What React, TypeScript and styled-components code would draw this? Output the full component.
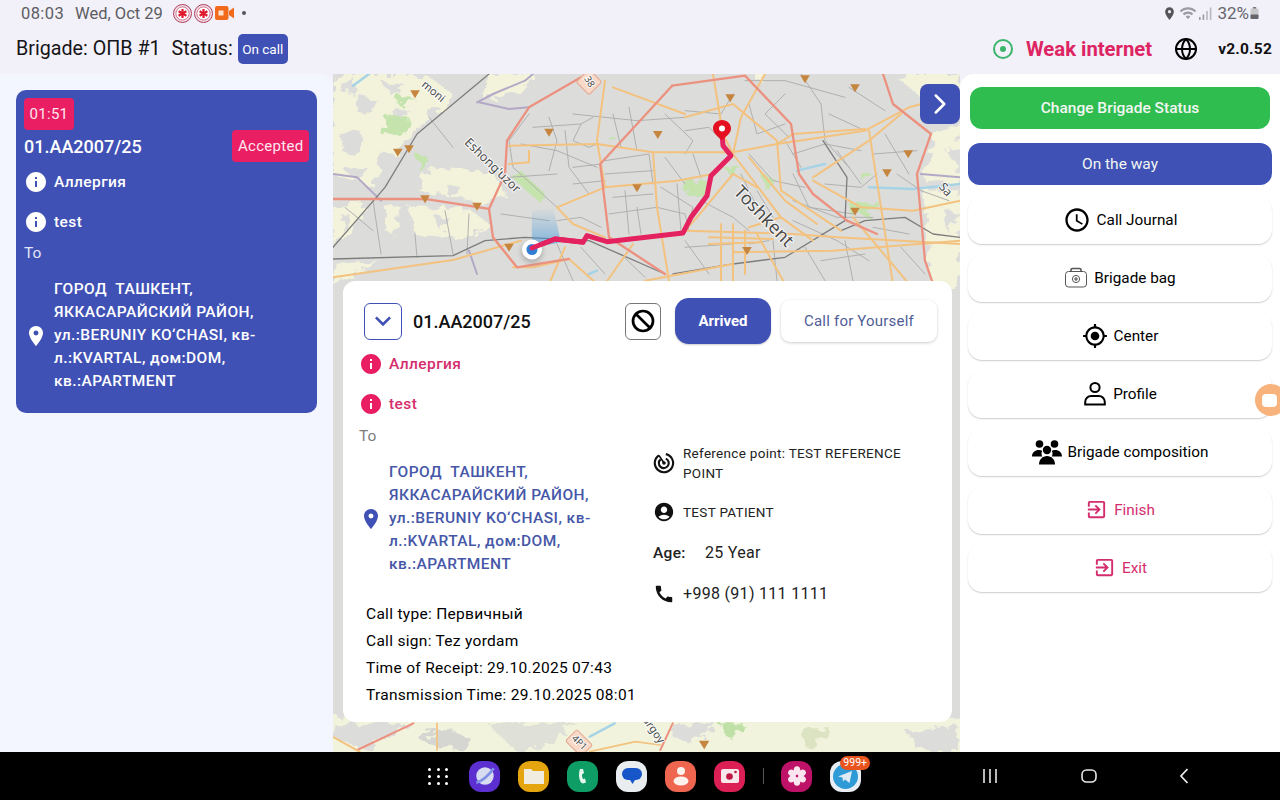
import styled, { createGlobalStyle } from 'styled-components';
import {
	MdAccountCircle,
	MdCall,
	MdExitToApp,
	MdInfo,
	MdKeyboardArrowDown,
	MdLocationOn,
	MdMyLocation,
	MdOutlineAccessTime,
	MdWifi,
} from 'react-icons/md';
import { Ban, ChevronRight, Globe } from 'lucide-react';

const blue = '#3f51b5';
const pink = '#e91e63';
const rose = '#d42d6d';

const GlobalStyle = createGlobalStyle`
	html, body {
		margin: 0;
		padding: 0;
		background: #f2f0f9;
		font-family: Roboto, "Noto Sans", sans-serif;
		overflow: hidden;
	}
	* { box-sizing: border-box; }
`;

const Page = styled.div`
	width: 1280px;
	height: 800px;
	display: flex;
	flex-direction: column;
	overflow: hidden;
	background: #f2f0f9;
	position: relative;
`;

/* ---------- android status bar ---------- */
const StatusBar = styled.div`
	height: 26px;
	padding: 0 21px;
	display: flex;
	align-items: center;
	color: #5d5d62;
	font-size: 16.5px;
`;

const StatusTime = styled.span`
	width: 54px;
	letter-spacing: 0.4px;
`;

const StatusDate = styled.span`
	width: 98px;
`;

const StatusIcons = styled.div`
	display: flex;
	align-items: center;
	gap: 2px;
`;

const StatusDot = styled.span`
	width: 4px;
	height: 4px;
	margin-left: 8px;
	border-radius: 50%;
	background: #55555c;
`;

const StatusRight = styled.div`
	margin-left: auto;
	display: flex;
	align-items: center;
	color: #66666c;
	font-size: 17px;
`;

const BatteryText = styled.span`
	margin: 0 1px 0 5px;
`;

/* ---------- app top bar ---------- */
const TopBar = styled.header`
	height: 48px;
	padding: 0 8px 3px 16px;
	display: flex;
	align-items: center;
	font-size: 19.7px;
	color: #151518;
`;

const StatusLabel = styled.span`
	margin-left: 11px;
	margin-right: 5px;
`;

const CallBadge = styled.span`
	height: 30px;
	width: 50px;
	display: flex;
	align-items: center;
	justify-content: center;
	border-radius: 5px;
	background: ${blue};
	color: #fff;
	font-size: 13.5px;
`;

const TopRight = styled.div`
	margin-left: auto;
	display: flex;
	align-items: center;
`;

const NetworkText = styled.span`
	margin-left: 13px;
	color: #dd2563;
	font-size: 20.3px;
	font-weight: 700;
`;

const GlobeWrap = styled.span`
	display: flex;
	margin: 0 20px 0 22px;
	color: #000;
`;

const Version = styled.span`
	font-size: 15.5px;
	font-weight: 700;
	letter-spacing: 0.2px;
	color: #111;
`;

/* ---------- main area ---------- */
const Main = styled.main`
	height: 678px;
	display: flex;
`;

const Sidebar = styled.aside`
	width: 333px;
	padding: 16px 16px 0;
	background: #f3f6fe;
	border-top-right-radius: 12px;
`;

const BrigadeCard = styled.section`
	width: 301px;
	height: 323px;
	padding: 8px;
	border-radius: 10px;
	background: ${blue};
	color: #fff;
`;

const Chip = styled.span`
	height: 32px;
	padding: 0 5.5px;
	display: inline-flex;
	align-items: center;
	border-radius: 4px;
	background: ${pink};
	color: #fde7ef;
	font-size: 15px;
	letter-spacing: 0.3px;
`;

const CardHead = styled.div`
	height: 32px;
	display: flex;
	align-items: center;
	justify-content: space-between;
`;

const CallNumber = styled.span`
	font-size: 18px;
	font-weight: 500;
`;

const AlertRow = styled.div<{ $tone: string }>`
	height: 20px;
	margin-top: 10px;
	padding-left: 2px;
	display: flex;
	align-items: center;
	gap: 8px;
	color: ${(p) => p.$tone};
	font-size: 15.5px;
	font-weight: 500;
	letter-spacing: 0.4px;
	& + & {
		margin-top: 20px;
	}
`;

const ToLabel = styled.div<{ $tone: string }>`
	height: 20px;
	margin-top: 11px;
	line-height: 20px;
	color: ${(p) => p.$tone};
	font-size: 15.5px;
`;

const AddressRow = styled.div<{ $tone: string }>`
	margin-top: 15px;
	padding-left: 2px;
	display: flex;
	align-items: center;
	gap: 8px;
	color: ${(p) => p.$tone};
	font-size: 15.5px;
	font-weight: 500;
	line-height: 23px;
	letter-spacing: 0.45px;
`;

const AddressText = styled.div`
	width: 212px;
`;

/* ---------- map ---------- */
const MapPane = styled.section`
	width: 627px;
	position: relative;
	overflow: hidden;
	background: #dcdcda;
`;

const MapSvg = styled.svg`
	display: block;
	width: 627px;
	height: 678px;
	& polyline {
		fill: none;
		vector-effect: non-scaling-stroke;
		stroke-linejoin: round;
		stroke-linecap: round;
	}
	& text {
		font-family: "Noto Sans", sans-serif;
		paint-order: stroke;
		stroke: rgba(255, 255, 255, 0.85);
		stroke-width: 2px;
		fill: #4b4b4b;
	}
`;

const CollapseButton = styled.button`
	position: absolute;
	top: 10px;
	right: 0;
	width: 40px;
	height: 40px;
	padding: 0;
	display: flex;
	align-items: center;
	justify-content: center;
	border: 0;
	border-radius: 8px;
	background: ${blue};
	color: #fff;
`;

const DetailCard = styled.section`
	position: absolute;
	left: 10px;
	top: 207px;
	width: 609px;
	height: 441px;
	padding: 17px 15px 0 16px;
	border-radius: 12px;
	background: #fff;
`;

const DetailHead = styled.div`
	height: 46px;
	margin-bottom: 3px;
	padding-left: 5px;
	display: flex;
	align-items: center;
`;

const SquareButton = styled.button<{ $w: number; $line: string }>`
	width: ${(p) => p.$w}px;
	height: 37px;
	padding: 0;
	display: flex;
	align-items: center;
	justify-content: center;
	border: 1px solid ${(p) => p.$line};
	border-radius: 6px;
	background: #fff;
	color: #000;
`;

const DetailNumber = styled.span`
	margin-left: 11px;
	color: #111;
	font-size: 18px;
	font-weight: 500;
`;

const ArrivedButton = styled.button`
	width: 96px;
	height: 46px;
	margin-left: 14px;
	border: 0;
	border-radius: 14px;
	background: ${blue};
	color: #fff;
	font: 700 15px Roboto, sans-serif;
	box-shadow: 0 1px 2px rgba(0, 0, 0, 0.2);
`;

const SelfButton = styled.button`
	width: 156px;
	height: 42px;
	margin-left: 10px;
	border: 0;
	border-radius: 9px;
	background: #fff;
	color: #4f5d97;
	font: 400 15px Roboto, sans-serif;
	letter-spacing: 0.2px;
	box-shadow: 0 1px 3px rgba(0, 0, 0, 0.2);
`;

const Spacer = styled.span`
	flex: 1;
`;

const DetailColumns = styled.div`
	margin-top: 1px;
	display: grid;
	grid-template-columns: 294px 1fr;
`;

const InfoList = styled.div`
	margin-top: 25px;
	padding-left: 7px;
	color: #000;
	font-size: 15.5px;
	line-height: 27px;
	letter-spacing: 0.3px;
`;

const FactColumn = styled.div`
	padding-top: 28px;
	display: flex;
	flex-direction: column;
	gap: 17px;
`;

const FactRow = styled.div<{ $size: number }>`
	min-height: 24px;
	display: flex;
	align-items: center;
	gap: 8px;
	color: #222;
	font-size: ${(p) => p.$size}px;
	line-height: 20px;
	letter-spacing: 0.3px;
`;

const AgeKey = styled.span`
	width: 52px;
	font-size: 15.5px;
	font-weight: 500;
`;

const AgeRow = styled(FactRow)`
	gap: 0;
`;

/* ---------- right panel ---------- */
const ActionPanel = styled.aside`
	position: relative;
	width: 320px;
	padding: 13px 8px 0;
	display: flex;
	flex-direction: column;
	border-top-left-radius: 14px;
	background: #fff;
`;

const SolidButton = styled.button<{ $bg: string; $inset: number; $after: number; $weight: number }>`
	height: 42px;
	margin: 0 ${(p) => p.$inset}px ${(p) => p.$after}px;
	border: 0;
	border-radius: 12px;
	background: ${(p) => p.$bg};
	color: #f2f6f2;
	font: ${(p) => p.$weight} 15.5px Roboto, sans-serif;
`;

const MenuButton = styled.button<{ $danger?: boolean }>`
	height: 47px;
	margin-bottom: 11px;
	padding: 0 0 2px;
	display: flex;
	align-items: center;
	justify-content: center;
	gap: 6px;
	border: 0;
	border-radius: 14px;
	background: #fff;
	color: ${(p) => (p.$danger ? rose : '#000')};
	font: 400 15.3px Roboto, sans-serif;
	box-shadow: 0 1px 1.5px rgba(0, 0, 0, 0.2);
`;

const FloatingBubble = styled.div`
	position: absolute;
	right: -7px;
	top: 310px;
	width: 32px;
	height: 32px;
	display: flex;
	align-items: center;
	padding-left: 7px;
	border-radius: 50%;
	background: #f8b27c;
`;

const BubbleGlyph = styled.span`
	width: 15px;
	height: 13px;
	border-radius: 4px;
	background: #fff;
`;

/* ---------- android nav bar ---------- */
const NavBar = styled.nav`
	height: 48px;
	padding-left: 428px;
	display: flex;
	align-items: center;
	background: #000;
`;

const AppGrid = styled.div`
	width: 20px;
	margin-right: 21px;
	display: grid;
	grid-template-columns: repeat(3, 3px);
	justify-content: space-between;
	row-gap: 4px;
	& span {
		height: 3px;
		border-radius: 50%;
		background: #fff;
	}
`;

const AppRow = styled.div`
	display: flex;
	align-items: center;
	gap: 18px;
`;

const AppIcon = styled.span<{ $bg: string }>`
	position: relative;
	width: 31px;
	height: 31px;
	display: flex;
	align-items: center;
	justify-content: center;
	border-radius: 12px;
	background: ${(p) => p.$bg};
`;

const NavDivider = styled.span`
	width: 1px;
	height: 16px;
	margin-right: -1px;
	background: #555;
`;

const CountBadge = styled.span`
	position: absolute;
	top: -5px;
	right: -9px;
	height: 14px;
	padding: 0 3px;
	border-radius: 7px;
	background: #e9541e;
	color: #fff;
	font-size: 10.5px;
	line-height: 14px;
`;

const SystemKeys = styled.div`
	margin-left: 121px;
	width: 207px;
	display: flex;
	align-items: center;
	justify-content: space-between;
`;

/* ---------- small drawings ---------- */
const Emblem = () => (
	<svg width="19" height="19" viewBox="0 0 19 19">
		<circle cx="9.5" cy="9.5" r="9" fill="#f3dfe6" stroke="#b03a5c" strokeWidth="1" />
		<circle cx="9.5" cy="9.5" r="6.6" fill="#fff" stroke="#c45a78" strokeWidth="0.8" />
		<g stroke="#e0182d" strokeWidth="2.2">
			<line x1="9.5" y1="5" x2="9.5" y2="14" />
			<line x1="5.6" y1="7.2" x2="13.4" y2="11.8" />
			<line x1="13.4" y1="7.2" x2="5.6" y2="11.8" />
		</g>
	</svg>
);

const VideoBadge = () => (
	<svg width="19" height="16" viewBox="0 0 19 16">
		<rect x="0" y="1" width="13.5" height="14" rx="2" fill="#f26a1b" />
		<path d="M14 6 L19 2.5 V13.5 L14 10 Z" fill="#f26a1b" />
		<rect x="3.5" y="5.5" width="5" height="5" fill="#fbe3d0" />
	</svg>
);

const SignalBars = () => (
	<svg width="13" height="13" viewBox="0 0 13 13">
		<rect x="0" y="10" width="1.6" height="3" fill="#9a9aa0" />
		<rect x="3.6" y="7.5" width="1.6" height="5.5" fill="#9a9aa0" />
		<rect x="7.2" y="4" width="1.6" height="9" fill="#b8b8bc" />
		<rect x="10.8" y="0.5" width="1.6" height="12.5" fill="#b8b8bc" />
	</svg>
);

const BatteryIcon = () => (
	<svg width="9" height="12" viewBox="0 0 9 12">
		<rect x="2.8" y="0" width="3.4" height="2" fill="#7a7a7e" />
		<rect x="0.5" y="1.5" width="8" height="10.5" rx="1" fill="#c9c9cc" />
		<rect x="0.5" y="7.5" width="8" height="4.5" rx="1" fill="#66666a" />
	</svg>
);

const SignalRing = () => (
	<svg width="20" height="20" viewBox="0 0 20 20">
		<circle cx="10" cy="10" r="9" fill="none" stroke="#3cb56c" strokeWidth="2" />
		<circle cx="10" cy="10" r="3" fill="#3cb56c" />
	</svg>
);

const ReferenceIcon = () => (
	<svg width="22" height="22" viewBox="0 0 24 24" fill="none" stroke="#111" strokeWidth="2.3" style={{ flexShrink: 0 }}>
		<path d="M14 2.300A10 10 0 1 1 6.500 3.700" />
		<path d="M14 7.200A5.400 5.400 0 1 1 8.300 8" />
		<circle cx="12" cy="12" r="2" fill="#111" stroke="none" />
		<path d="M6.500 3.700 12 12" strokeWidth="1.800" />
	</svg>
);

const BagIcon = () => (
	<svg width="24" height="22" viewBox="0 0 24 22" fill="none" stroke="#555" strokeWidth="1">
		<rect x="1.5" y="4.5" width="21" height="15.5" rx="3" />
		<path d="M7 4.5V3a1.5 1.5 0 0 1 1.5-1.5h7A1.5 1.5 0 0 1 17 3v1.5" strokeWidth="1.6" />
		<circle cx="12" cy="12" r="3.6" />
		<path d="M12 10v4M10 12h4" strokeWidth="1.2" />
	</svg>
);

const ProfileIcon = () => (
	<svg width="24" height="25" viewBox="0 0 24 25" fill="none" stroke="#000" strokeWidth="2">
		<circle cx="12" cy="6.5" r="4.6" />
		<path d="M2.2 23.5V21a6 6 0 0 1 6-6h7.6a6 6 0 0 1 6 6v2.5Z" />
	</svg>
);

const CrewIcon = () => (
	<svg width="30" height="26" viewBox="0 0 30 26" fill="#000">
		<circle cx="7.5" cy="5" r="3.8" />
		<circle cx="22.500" cy="5" r="3.8" />
		<circle cx="15" cy="11" r="4.2" />
		<path d="M0 17.500c0-4 3-6.500 7-6.500 1.300 0 2.300.2 3.200.7-.5.900-.7 2-.7 3 0 1 .3 2 .8 2.800Z" />
		<path d="M30 17.500c0-4-3-6.500-7-6.500-1.300 0-2.300.2-3.200.7.500.900.700 2 .700 3 0 1-.3 2-.8 2.800Z" />
		<path d="M7 25.500c0-5 3.500-8.500 8-8.500s8 3.500 8 8.500Z" />
	</svg>
);

const AppGlyph = ({ d, fill = '#fff' }: { d: string; fill?: string }) => (
	<svg width="20" height="20" viewBox="0 0 20 20">
		<path d={d} fill={fill} />
	</svg>
);

/* ---------- map drawing, coordinates traced from the 2.5x/3x crop ---------- */
const fields = [
	'0,0 230,0 300,60 190,190 100,340 0,300',
	'385,0 500,0 470,45 380,75',
	'240,285 400,290 435,370 370,385 210,350',
	'190,395 340,405 385,445 350,490 205,480',
	'0,400 75,385 60,470 0,510',
	'130,390 170,400 150,480 130,470',
	'1400,0 1568,0 1568,130 1470,70',
	'1505,180 1568,150 1568,330 1480,320',
	'1480,340 1568,350 1568,630 1495,630',
	'0,570 120,560 60,600 0,630',
	'1060,0 1080,0 1060,30',
];

const specks = [
	'60,60 110,80 95,120 50,105',
	'150,100 190,110 160,150',
	'20,180 70,170 80,230 30,240',
	'300,0 340,20 300,60 270,30',
	'1500,30 1540,50 1500,90',
	'1530,230 1568,210 1568,280',
	'110,230 170,240 120,320',
	'280,330 320,340 290,370',
	'10,20 50,10 60,50 20,55',
	'120,20 180,30 150,70',
	'30,290 80,270 70,330',
	'20,420 50,430 30,480',
	'250,420 290,430 270,470',
	'1520,400 1568,420 1540,480',
];

const greens = [
	'470,290 530,360 510,378 450,312',
	'130,130 190,130 170,190 120,180',
	'210,240 240,250 220,295',
	'885,320 940,315 930,372 880,360',
	'975,280 1015,275 1000,312',
	'1290,390 1360,380 1340,432 1290,420',
	'160,60 200,70 170,100',
	'1070,300 1110,320 1080,350',
	'680,180 700,180 690,200',
	'1320,290 1350,300 1330,330',
];

const streets = [
	'600,120 760,140 880,130',
	'490,120 440,200 450,280 560,400',
	'580,170 590,280 640,360',
	'620,150 600,200 640,220 660,210',
	'680,260 790,240 800,330',
	'680,300 800,290',
	'690,420 810,400 880,420 890,470',
	'730,350 740,480',
	'760,400 770,480',
	'830,250 880,330',
	'880,170 940,160 980,210',
	'830,120 900,200 880,240',
	'1130,60 1080,120 1140,190',
	'1170,0 1220,90 1230,200 1290,280',
	'1150,240 1230,210 1320,230',
	'1040,240 1100,320 1180,340',
	'1230,330 1320,340 1360,300',
	'1150,380 1260,430 1350,430',
	'1150,440 1260,500 1340,560',
	'1100,500 1110,620',
	'1180,520 1230,620',
	'1280,500 1300,620',
	'1410,300 1470,350 1540,380',
	'1350,240 1460,230',
	'1030,20 1130,20 1280,70',
	'1290,40 1380,110',
	'880,500 940,600',
	'620,520 680,600',
	'720,540 780,610',
	'100,380 120,540',
	'205,480 210,550',
	'340,420 335,540',
	'420,420 540,440',
	'560,440 620,430 670,460',
	'440,310 560,300',
	'470,210 560,230 660,280',
	'1000,60 970,120 880,110',
	'540,130 560,200 540,290',
	'500,160 620,150 650,130',
	'600,280 670,270',
	'600,330 680,320',
	'700,120 720,220',
	'740,100 760,230',
	'700,370 800,360',
	'820,340 900,400 890,440',
	'860,330 870,470',
	'920,380 1000,430 1040,470',
	'900,240 920,310',
	'1040,90 1060,180 1130,150',
	'1130,200 1170,280',
	'1240,120 1330,170',
	'1260,230 1320,330',
	'1380,180 1440,300',
	'1150,300 1190,400 1300,420',
	'1020,300 1060,400',
	'1060,350 1100,430',
	'880,520 1000,510',
	'1040,510 1090,500',
	'1220,560 1330,540',
	'1350,460 1440,480',
	'1420,520 1480,600',
	'560,510 600,620',
	'240,130 300,220',
	'30,400 100,470',
	'280,410 300,540',
];

const mainRoads = [
	'440,215 660,210 800,235 1000,235 1110,210 1330,170 1440,100 1568,60',
	'560,400 680,340 860,320 950,300',
	'680,20 660,200 680,340',
	'800,235 810,400 840,620',
	'880,130 1000,90 1110,200 1120,350 1270,470',
	'700,40 880,120',
	'950,0 975,180 1000,240 1120,430 1200,500',
	'1080,0 1020,130 1000,240',
	'880,470 1150,480 1260,490 1568,510',
	'1000,535 1250,530 1568,500',
	'0,610 300,558 470,500',
	'1340,170 1400,630',
	'1200,310 1340,200 1420,120',
	'1200,320 1320,400 1450,410 1568,380',
	'560,400 600,450 680,490',
	'970,450 970,630',
	'1000,450 1000,630',
	'1030,470 1030,600',
	'400,490 460,580',
	'540,630 580,520',
	'440,270 490,265 490,230',
	'880,470 910,430 1000,300',
	'1120,430 1040,460',
	'1060,480 1130,630',
	'680,630 750,510',
	'450,580 500,580 590,555 660,630',
	'780,620 1000,570',
	'1300,430 1440,630',
	'1040,250 1130,380 1210,450',
	'940,510 1070,505',
	'940,490 1100,495',
	'1000,300 1060,340',
	'1110,210 1150,180 1330,165',
];

const salmonRoads = [
	'848,35 1030,5 1145,150 1165,300 1200,360 1285,440',
	'848,35 668,270 690,490',
	'0,375 230,375 390,405 430,300 435,200 490,100 620,10',
	'1375,0 1400,90 1495,180 1460,300 1480,560 1500,630',
	'390,405 400,490 460,580 590,555',
	'690,490 830,600',
	'1285,440 1360,480',
];

const railways = [
	'0,555 300,545 380,500 480,490 640,500 830,600',
	'0,520 130,340 210,180 390,0',
	'1225,200 1285,310 1280,440 1130,550 1000,570 850,600',
	'1270,470 1330,440 1430,430 1500,480 1568,490',
];

const purpleEdges = [
	'360,85 400,60 480,20 500,0',
	'365,85 440,105 490,100',
	'0,300 60,310 120,380',
	'340,530 360,600',
	'1470,300 1568,310',
];

const rivers = [
	'50,35 90,0',
	'1340,340 1450,345 1568,330',
	'1160,290 1230,270',
	'640,600 660,590',
];

const markers = [
	[205, 60], [540, 175], [812, 182], [993, 72], [1180, 15], [1305, 42], [1438, 240],
	[1385, 297], [1305, 412], [760, 342], [230, 375], [360, 397], [162, 235], [190, 225],
	[440, 520], [1035, 530],
];

const routePoints =
	'497,522 555,495 625,505 635,485 685,503 875,477 895,430 935,365 945,305 995,245 975,215 972,170';

const CityMap = () => (
	<MapSvg viewBox="0 0 627 678">
		<defs>
			<linearGradient id="headingCone" x1="0" y1="1" x2="0" y2="0">
				<stop offset="0" stopColor="#3d97dd" stopOpacity="0.6" />
				<stop offset="1" stopColor="#3d97dd" stopOpacity="0" />
			</linearGradient>
			<filter id="soft" x="-50%" y="-50%" width="200%" height="200%">
				<feGaussianBlur stdDeviation="2.5" />
			</filter>
			<filter id="blotchy" x="-5%" y="-5%" width="110%" height="110%">
				<feTurbulence type="fractalNoise" baseFrequency="0.03" numOctaves="3" seed="4" />
				<feDisplacementMap in="SourceGraphic" scale="45" />
			</filter>
		</defs>
		<g transform="scale(0.4 0.3333)">
			<g filter="url(#blotchy)">
				{fields.map((p) => (
					<polygon key={p} points={p} fill="#f3f3dc" />
				))}
				{specks.map((p) => (
					<polygon key={p} points={p} fill="#dcdcda" />
				))}
				{greens.map((p) => (
					<polygon key={p} points={p} fill="#c5e3ad" />
				))}
			</g>
			{rivers.map((p) => (
				<polyline key={p} points={p} stroke="#a7d3e6" strokeWidth="2.5" />
			))}
			{purpleEdges.map((p) => (
				<polyline key={p} points={p} stroke="#b3a9c6" strokeWidth="2" />
			))}
			{streets.map((p) => (
				<polyline key={p} points={p} stroke="#b0b0b0" strokeWidth="1" />
			))}
			{railways.map((p) => (
				<polyline key={p} points={p} stroke="#7d7d7d" strokeWidth="1.3" />
			))}
			{mainRoads.map((p) => (
				<polyline key={p} points={p} stroke="#f3c27f" strokeWidth="2" />
			))}
			{salmonRoads.map((p) => (
				<polyline key={p} points={p} stroke="#ec9180" strokeWidth="2.3" />
			))}
			{markers.map(([x, y]) => (
				<polygon key={`${x}-${y}`} points={`${x - 12},${y - 11} ${x + 12},${y - 11} ${x},${y + 13}`} fill="#c6853f" />
			))}
			<polygon points="497,522 497,410 550,400 570,505" fill="url(#headingCone)" />
			<polyline points={routePoints} stroke="#e3225f" strokeWidth="5" />
		</g>
		<text x="0" y="0" fontSize="18" transform="translate(430 143) rotate(46)" textAnchor="middle" dominantBaseline="middle">Toshkent</text>
		<text x="0" y="0" fontSize="12.5" transform="translate(159 92) rotate(44)" textAnchor="middle" dominantBaseline="middle">Eshong'uzor</text>
		<text x="0" y="0" fontSize="11" transform="translate(100 18) rotate(40)" textAnchor="middle" dominantBaseline="middle" fill="#8c80a8">moni</text>
		<text x="0" y="0" fontSize="12" transform="translate(612 116) rotate(50)" textAnchor="middle" dominantBaseline="middle">Sa</text>
		<g transform="translate(256 8) rotate(45)">
			<rect x="-9" y="-9" width="18" height="18" rx="2" fill="#f8d9c8" stroke="#e2a68e" />
			<text x="0" y="0" fontSize="9.5" transform="rotate(15)" textAnchor="middle" dominantBaseline="middle">38</text>
		</g>
		<circle cx="199" cy="178" r="11" fill="#888" opacity="0.5" filter="url(#soft)" />
		<circle cx="199" cy="175.5" r="10" fill="#fff" />
		<circle cx="199" cy="175.5" r="5.5" fill="#2f7fd6" />
		<polyline points="199,174 222,165 250,168" stroke="#e3225f" strokeWidth="5" />
		<path d="M389 46c5.200 0 9 3.800 9 8.500 0 5-5.500 8.500-9 11.500-3.500-3-9-6.500-9-11.500 0-4.700 3.800-8.500 9-8.500Z" fill="#e4101f" />
		<circle cx="389" cy="54.500" r="3" fill="#fff" />
		<g transform="translate(-13 626) scale(0.415 0.3333)">
			<g filter="url(#blotchy)">
				<polygon points="-40,50 1600,50 1600,170 -40,170" fill="#f1f3dc" />
				<polygon points="30,70 220,70 110,150 30,110" fill="#dcdcda" />
				<polygon points="270,80 360,110 340,150 250,130" fill="#d5d5d2" />
				<polygon points="400,70 620,70 560,130 470,150" fill="#dfe0d8" />
				<polygon points="850,70 960,70 890,130 850,110" fill="#dcdcda" />
				<polygon points="960,70 1020,70 990,120" fill="#bfe0a7" />
				<polygon points="1150,90 1230,80 1180,150" fill="#dbe3c3" />
				<polygon points="1420,100 1530,70 1540,150 1440,150" fill="#dcdcda" />
			</g>
			<polyline points="225,70 90,150" stroke="#ec9180" strokeWidth="2" />
			<polyline points="30,110 95,155" stroke="#f3c27f" strokeWidth="2" />
			<polyline points="282,70 282,150" stroke="#f3c27f" strokeWidth="1.700" />
			<polyline points="650,110 710,70" stroke="#a7d3e6" strokeWidth="2.500" />
			<polyline points="850,70 820,150" stroke="#ec9180" strokeWidth="2" />
			<polyline points="650,155 760,125 820,135" stroke="#f3c27f" strokeWidth="1.700" />
			<polygon points="913,122 938,122 926,148" fill="#c6853f" />
		</g>
		<g transform="translate(246 669) rotate(45)">
			<rect x="-11" y="-8" width="22" height="16" rx="2" fill="#f8d9c8" stroke="#e2a68e" />
			<text x="0" y="0" fontSize="9.5" textAnchor="middle" dominantBaseline="middle">4P1</text>
		</g>
		<text x="0" y="0" fontSize="11" transform="translate(320 656) rotate(55)" textAnchor="middle" dominantBaseline="middle">urgoy</text>
	</MapSvg>
);

const Address = () => (
	<AddressText>
		ГОРОД&nbsp; ТАШКЕНТ, ЯККАСАРАЙСКИЙ РАЙОН, ул.:BERUNIY KO‘CHASI, кв-л.:KVARTAL, дом:DOM, кв.:APARTMENT
	</AddressText>
);

const App = () => {
	return (
		<Page>
			<GlobalStyle />
			<StatusBar>
				<StatusTime>08:03</StatusTime>
				<StatusDate>Wed, Oct 29</StatusDate>
				<StatusIcons>
					<Emblem />
					<Emblem />
					<VideoBadge />
				</StatusIcons>
				<StatusDot />
				<StatusRight>
					<MdLocationOn size={15} color="#55555a" />
					<MdWifi size={18} color="#9a9aa0" style={{ margin: '0 2px' }} />
					<SignalBars />
					<BatteryText>32%</BatteryText>
					<BatteryIcon />
				</StatusRight>
			</StatusBar>

			<TopBar>
				<span>Brigade: ОПВ #1</span>
				<StatusLabel>Status:</StatusLabel>
				<CallBadge>On call</CallBadge>
				<TopRight>
					<SignalRing />
					<NetworkText>Weak internet</NetworkText>
					<GlobeWrap>
						<Globe size={24} strokeWidth={2} />
					</GlobeWrap>
					<Version>v2.0.52</Version>
				</TopRight>
			</TopBar>

			<Main>
				<Sidebar>
					<BrigadeCard>
						<Chip>01:51</Chip>
						<CardHead>
							<CallNumber>01.AA2007/25</CallNumber>
							<Chip>Accepted</Chip>
						</CardHead>
						<AlertRow $tone="#fff">
							<MdInfo size={24} style={{ margin: '0 -2px' }} />
							Аллергия
						</AlertRow>
						<AlertRow $tone="#fff">
							<MdInfo size={24} style={{ margin: '0 -2px' }} />
							test
						</AlertRow>
						<ToLabel $tone="#e3e6f5">To</ToLabel>
						<AddressRow $tone="#fff">
							<MdLocationOn size={24} style={{ margin: '0 -2px' }} />
							<Address />
						</AddressRow>
					</BrigadeCard>
				</Sidebar>

				<MapPane>
					<CityMap />
					<CollapseButton>
						<ChevronRight size={34} strokeWidth={1.8} />
					</CollapseButton>
					<DetailCard>
						<DetailHead>
							<SquareButton $w={38} $line={blue}>
								<MdKeyboardArrowDown size={32} color={blue} />
							</SquareButton>
							<DetailNumber>01.AA2007/25</DetailNumber>
							<Spacer />
							<SquareButton $w={36} $line="#777">
								<Ban size={24} strokeWidth={2.7} />
							</SquareButton>
							<ArrivedButton>Arrived</ArrivedButton>
							<SelfButton>Call for Yourself</SelfButton>
						</DetailHead>
						<AlertRow $tone={rose}>
							<MdInfo size={24} color={pink} style={{ margin: '0 -2px' }} />
							Аллергия
						</AlertRow>
						<AlertRow $tone={rose}>
							<MdInfo size={24} color={pink} style={{ margin: '0 -2px' }} />
							test
						</AlertRow>
						<DetailColumns>
							<div>
								<ToLabel $tone="#7d7d7d">To</ToLabel>
								<AddressRow $tone="#4657a8">
									<MdLocationOn size={24} color={blue} style={{ margin: '0 -2px' }} />
									<Address />
								</AddressRow>
								<InfoList>
									<div>Call type: Первичный</div>
									<div>Call sign: Tez yordam</div>
									<div>Time of Receipt: 29.10.2025 07:43</div>
									<div>Transmission Time: 29.10.2025 08:01</div>
								</InfoList>
							</div>
							<FactColumn>
								<FactRow $size={13.5}>
									<ReferenceIcon />
									<span>Reference point: TEST REFERENCE POINT</span>
								</FactRow>
								<FactRow $size={13.5}>
									<MdAccountCircle size={22} color="#111" />
									TEST PATIENT
								</FactRow>
								<AgeRow $size={16}>
									<AgeKey>Age:</AgeKey>
									25 Year
								</AgeRow>
								<FactRow $size={16}>
									<MdCall size={22} color="#111" />
									+998 (91) 111 1111
								</FactRow>
							</FactColumn>
						</DetailColumns>
					</DetailCard>
				</MapPane>

				<ActionPanel>
					<SolidButton $bg="#2fbd50" $inset={2} $after={14} $weight={500}>Change Brigade Status</SolidButton>
					<SolidButton $bg={blue} $inset={0} $after={12} $weight={400}>On the way</SolidButton>
					<MenuButton>
						<MdOutlineAccessTime size={28} />
						Call Journal
					</MenuButton>
					<MenuButton>
						<BagIcon />
						Brigade bag
					</MenuButton>
					<MenuButton>
						<MdMyLocation size={26} />
						Center
					</MenuButton>
					<MenuButton>
						<ProfileIcon />
						Profile
					</MenuButton>
					<MenuButton>
						<CrewIcon />
						Brigade composition
					</MenuButton>
					<MenuButton $danger>
						<MdExitToApp size={23} />
						Finish
					</MenuButton>
					<MenuButton $danger>
						<MdExitToApp size={23} />
						Exit
					</MenuButton>
					<FloatingBubble>
						<BubbleGlyph />
					</FloatingBubble>
				</ActionPanel>
			</Main>

			<NavBar>
				<AppGrid>
					{Array.from({ length: 9 }, (_, i) => (
						<span key={i} />
					))}
				</AppGrid>
				<AppRow>
					<AppIcon $bg="#5b2fd0">
						<svg width="24" height="24" viewBox="0 0 22 22">
							<circle cx="11" cy="11" r="8" fill="#d8dcf0" />
							<path d="M3 17C8 16 15 10 19 4" stroke="#7e8fe6" strokeWidth="2.5" fill="none" />
						</svg>
					</AppIcon>
					<AppIcon $bg="#e5a50e">
						<svg width="22" height="18" viewBox="0 0 22 18">
							<path d="M1 2h7l2 2h11v13H1Z" fill="#f1ece0" />
						</svg>
					</AppIcon>
					<AppIcon $bg="#0f9d66">
						<AppGlyph d="M7 3h3l1 4-2 1.500c0 2 .5 3.500 1 4.500l2-.5 1 4-3 1C6 17 5 8 7 3Z" fill="#e5f6ee" />
					</AppIcon>
					<AppIcon $bg="#e9edf0">
						<svg width="24" height="22" viewBox="0 0 24 22">
							<rect x="2" y="3" width="20" height="12" rx="6" fill="#1656c9" />
							<path d="M10 15h5l-2.500 4Z" fill="#1656c9" />
						</svg>
					</AppIcon>
					<AppIcon $bg="#ee6650">
						<svg width="20" height="22" viewBox="0 0 20 22">
							<circle cx="10" cy="6" r="4" fill="#fff1ec" />
							<ellipse cx="10" cy="16" rx="7.500" ry="4.500" fill="#fff1ec" />
						</svg>
					</AppIcon>
					<AppIcon $bg="#dc1f55">
						<svg width="20" height="18" viewBox="0 0 20 18">
							<rect x="1" y="2" width="18" height="14" rx="2" fill="#f8e8ec" />
							<circle cx="9.500" cy="9.500" r="3.300" fill="#c01545" />
							<circle cx="15.500" cy="5" r="1.300" fill="#c01545" />
						</svg>
					</AppIcon>
					<NavDivider />
					<AppIcon $bg="#bd1267">
						<svg width="22" height="22" viewBox="0 0 22 22">
							{[0, 60, 120, 180, 240, 300].map((a) => (
								<ellipse key={a} cx="11" cy="5.500" rx="3.300" ry="4.300" fill="#fbe6ef" transform={`rotate(${a} 11 11)`} />
							))}
						</svg>
					</AppIcon>
					<AppIcon $bg="#e8eef3">
						<svg width="27" height="27" viewBox="0 0 27 27">
							<circle cx="13.500" cy="13.500" r="12.500" fill="#2f9bd6" />
							<path d="M6 13.500 20 8l-2.500 12-4.500-3.500-2 2-.5-4Z" fill="#dcebf5" />
						</svg>
						<CountBadge>999+</CountBadge>
					</AppIcon>
				</AppRow>
				<SystemKeys>
					<svg width="16" height="14" viewBox="0 0 16 14" stroke="#e8e8e8" strokeWidth="1.600">
						<path d="M2 0v14M8 0v14M14 0v14" />
					</svg>
					<svg width="16" height="14" viewBox="0 0 16 14" fill="none" stroke="#e8e8e8" strokeWidth="1.600">
						<rect x="1" y="1" width="14" height="12" rx="4.500" />
					</svg>
					<svg width="10" height="16" viewBox="0 0 10 16" fill="none" stroke="#e8e8e8" strokeWidth="1.800">
						<path d="M8.500 1 2 8l6.500 7" />
					</svg>
				</SystemKeys>
			</NavBar>
		</Page>
	);
};

export default App;
